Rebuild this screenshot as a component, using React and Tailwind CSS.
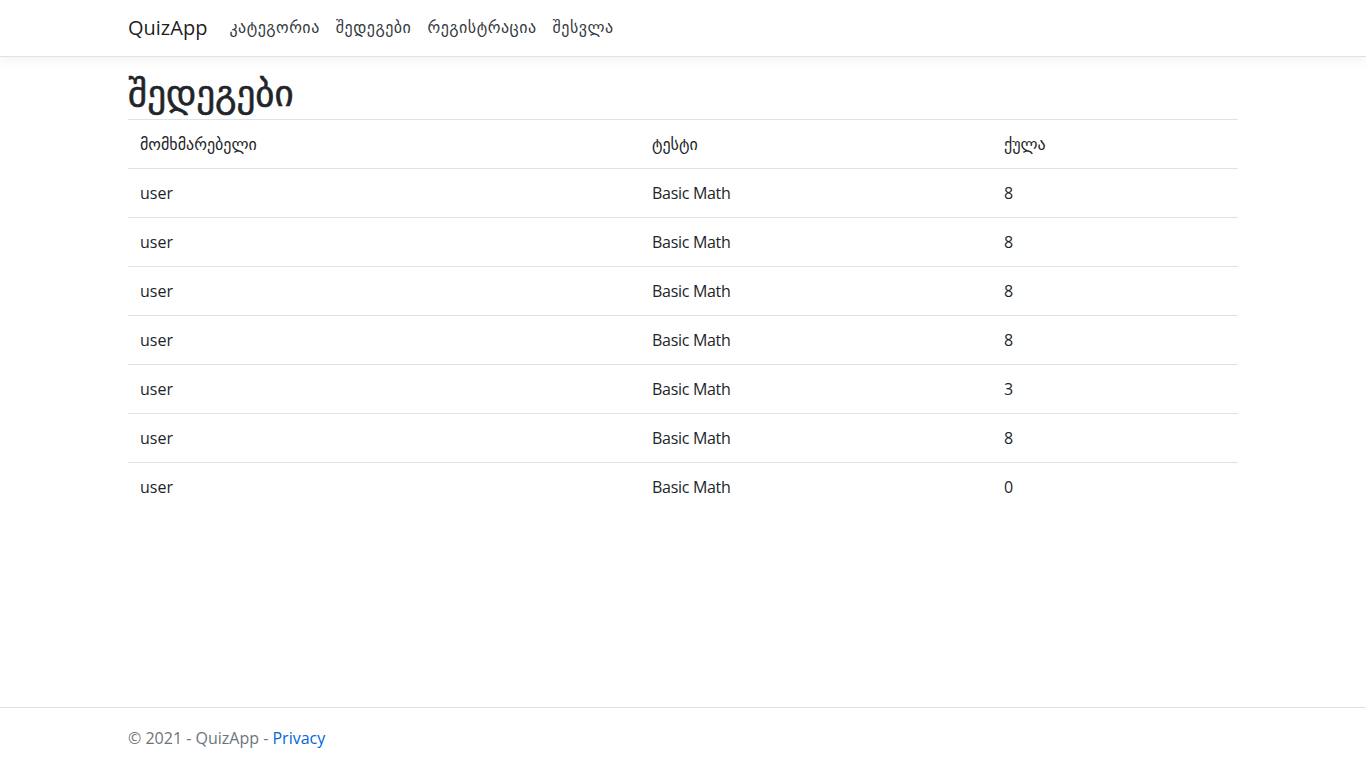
export default function App() {
  const rows = [8, 8, 8, 8, 3, 8, 0];
  return (
    <div className="min-h-screen flex flex-col bg-white text-[#212529] font-['Open_Sans','DejaVu_Sans',sans-serif]">
      <header className="border-b border-[#dee2e6] bg-white shadow-[0_4px_12px_rgba(0,0,0,0.05)] mb-4">
        <nav className="mx-auto w-[1140px] px-[15px] py-2 flex items-center">
          <span className="text-[20px] leading-[30px] py-[5px] mr-[14px] text-[rgba(0,0,0,0.9)]">QuizApp</span>
          <ul className="flex items-center text-[16px] leading-6 text-[#343a40] font-['DejaVu_Sans',sans-serif] tracking-[0.5px]">
            <li className="px-2 py-2">კატეგორია</li>
            <li className="px-2 py-2">შედეგები</li>
            <li className="px-2 py-2">რეგისტრაცია</li>
            <li className="px-2 py-2">შესვლა</li>
          </ul>
        </nav>
      </header>
      <main className="mx-auto w-[1140px] px-[15px] pb-8">
        <h1 className="text-[37px] leading-[38px] mb-[8px] font-normal [-webkit-text-stroke:0.6px_#212529]">შედეგები</h1>
        <table className="w-full text-[16px] leading-6 border-collapse">
          <thead>
            <tr className="border-t border-b border-[#dee2e6]">
              <th className="text-left font-normal p-3 w-[512px]">მომხმარებელი</th>
              <th className="text-left font-normal p-3 w-[352px]">ტესტი</th>
              <th className="text-left font-normal p-3">ქულა</th>
            </tr>
          </thead>
          <tbody>
            {rows.map((s, i) => (
              <tr key={i} className={i < rows.length - 1 ? "border-b border-[#dee2e6]" : ""}>
                <td className="p-3">user</td>
                <td className="p-3 tracking-[-0.3px]">Basic Math</td>
                <td className="p-3">{s}</td>
              </tr>
            ))}
          </tbody>
        </table>
      </main>
      <footer className="mt-auto border-t border-[#dee2e6] h-[61px]">
        <div className="mx-auto w-[1140px] px-[15px] leading-[60px] text-[16px] text-[#6c757d]">
          © 2021 - QuizApp - <span className="text-[#0366d6]">Privacy</span>
        </div>
      </footer>
    </div>
  );
}
